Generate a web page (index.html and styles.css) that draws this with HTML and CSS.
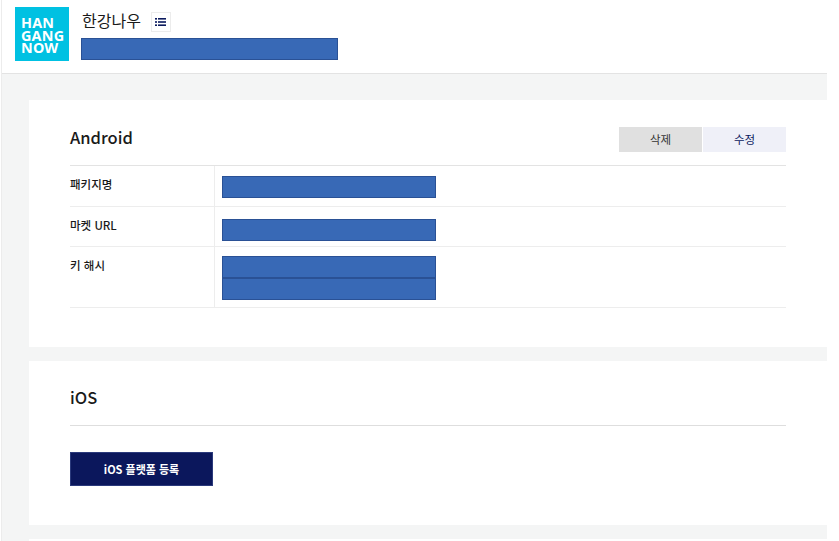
FILE: index.html
```html
<!DOCTYPE html>
<html lang="ko">
<head>
<meta charset="utf-8">
<title>한강나우</title>
<link rel="stylesheet" href="styles.css">
</head>
<body>
<div class="page">
  <header class="app-head">
    <div class="logo"><span>HAN</span><span>GANG</span><span>NOW</span></div>
    <div class="app-info">
      <div class="app-title">
        <h1>한강나우</h1>
        <button class="list-btn" aria-label="목록">
          <svg width="11" height="8" viewBox="0 0 11 8"><g fill="#0b1a5e"><rect x="0" y="0" width="2" height="1.6"/><rect x="3" y="0" width="8" height="1.6"/><rect x="0" y="3.2" width="2" height="1.6"/><rect x="3" y="3.2" width="8" height="1.6"/><rect x="0" y="6.4" width="2" height="1.6"/><rect x="3" y="6.4" width="8" height="1.6"/></g></svg>
        </button>
      </div>
      <div class="mask mask-head"></div>
    </div>
  </header>
  <main class="content">
    <section class="card card-android">
      <div class="card-head">
        <h2>Android</h2>
        <div class="actions">
          <button class="btn btn-del">삭제</button>
          <button class="btn btn-edit">수정</button>
        </div>
      </div>
      <div class="row row-a">
        <div class="label">패키지명</div>
        <div class="value"><div class="mask"></div></div>
      </div>
      <div class="row row-b">
        <div class="label">마켓 URL</div>
        <div class="value"><div class="mask"></div></div>
      </div>
      <div class="row row-c">
        <div class="label">키 해시</div>
        <div class="value"><div class="mask"></div><div class="mask"></div></div>
      </div>
    </section>
    <section class="card card-ios">
      <div class="card-head">
        <h2>iOS</h2>
      </div>
      <button class="btn-primary">iOS 플랫폼 등록</button>
    </section>
    <section class="card card-rest"></section>
  </main>
</div>
</body>
</html>
```
FILE: styles.css
```css
* { box-sizing: border-box; }
html, body { margin: 0; height: 100%; background: #fff; overflow: hidden; }
body { font-family: "Noto Sans CJK KR", "Noto Sans", sans-serif; color: #1a1a1a; }
.page { width: 826px; height: 541px; margin-left: 1px; border-left: 1px solid #ececec; display: flex; flex-direction: column; overflow: hidden; }
.app-head { height: 74px; padding: 7px 0 0 13px; display: flex; gap: 12px; background: #fff; border-bottom: 1px solid #e3e3e3; flex: none; }
.logo { width: 54px; height: 54px; background: #00c1e2; color: #fff; font-family: "Noto Sans", sans-serif; font-weight: 700; font-size: 14.4px; line-height: 12.5px; letter-spacing: 0.2px; padding: 10px 0 0 6px; display: flex; flex-direction: column; }
.app-info { width: 257px; }
.app-title { display: flex; align-items: flex-start; gap: 10px; height: 31px; }
h1 { margin: 0; font-size: 16px; font-weight: 400; line-height: 26px; margin-left: 1px; }
.list-btn { width: 20px; height: 20px; margin-top: 5px; padding: 0; border: 1px solid #ececec; background: #fff; display: flex; align-items: center; justify-content: center; }
.mask { width: 214px; height: 22px; background: #3869b6; border: 1px solid #2a5195; }
.mask-head { width: 257px; }
.content { flex: 1; background: #f4f5f5; padding: 26px 0 0 27px; display: flex; flex-direction: column; gap: 14px; }
.card { background: #fff; padding: 0 41px; flex: none; }
.card-android { height: 247px; }
.card-ios { height: 164px; }
.card-rest { height: 40px; }
.card-head { height: 66px; display: flex; align-items: center; justify-content: space-between; border-bottom: 1px solid #e3e3e3; padding-top: 14px; }
.card-android h2 { margin-bottom: 5px; }
.card-ios .card-head { height: 65px; padding-top: 8px; border-color: #dedede; }
h2 { margin: 0; font-size: 16.5px; font-weight: 500; line-height: 26px; }
.actions { display: flex; gap: 1px; }
.btn { width: 83px; height: 25px; border: 0; padding: 0 0 2px; font: inherit; font-size: 11.5px; }
.btn-del { background: #e0e0e0; color: #333; }
.btn-edit { background: #eff0f8; color: #0b1a5e; }
.row { display: grid; grid-template-columns: 144px 1fr; border-bottom: 1px solid #ededed; }
.row-a { height: 41px; }
.row-b { height: 40px; }
.row-c { height: 61px; }
.label { padding-top: 9px; font-size: 11.5px; font-weight: 500; line-height: 18px; }
.value { border-left: 1px solid #ededed; padding: 10px 0 0 7px; display: flex; flex-direction: column; }
.row-b .value { padding-top: 12px; }
.row-c .value { padding-top: 9px; }
.btn-primary { display: block; margin-top: 26px; width: 143px; height: 34px; background: #0b175c; border: 1px solid #2b3a7c; color: #fff; font: inherit; font-size: 11px; font-weight: 700; padding: 0; }
```
